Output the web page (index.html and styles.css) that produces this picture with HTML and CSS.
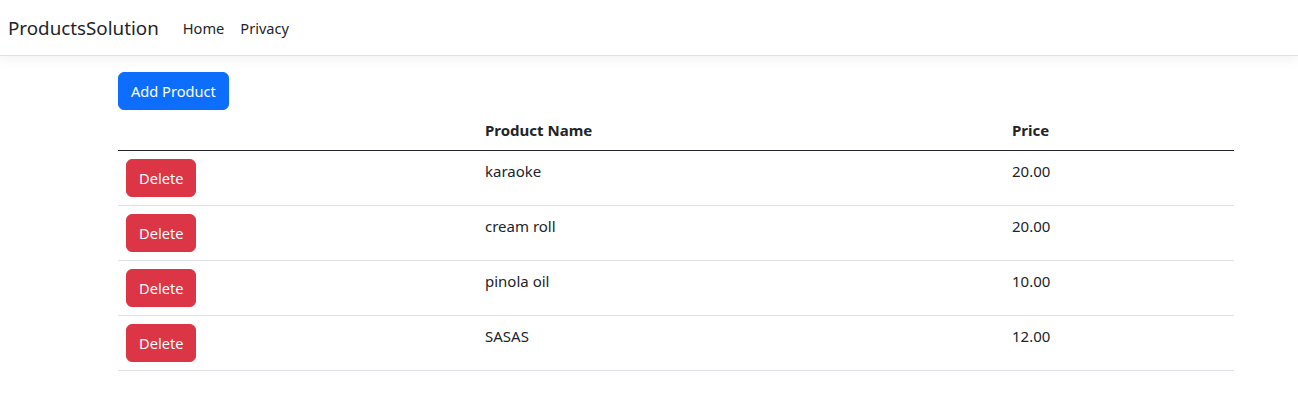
FILE: index.html
```html
<!DOCTYPE html>
<html lang="en">
<head>
<meta charset="utf-8">
<title>ProductsSolution</title>
<link rel="stylesheet" href="styles.css">
</head>
<body>
<header class="navbar">
  <a class="brand" href="#">ProductsSolution</a>
  <nav class="nav">
    <a class="nav-link" href="#">Home</a>
    <a class="nav-link" href="#">Privacy</a>
  </nav>
</header>
<main class="container">
  <div class="actions"><a class="btn btn-primary" href="#">Add Product</a></div>
  <table class="table">
    <colgroup>
      <col class="c1"><col class="c2"><col class="c3">
    </colgroup>
    <thead>
      <tr><th></th><th>Product Name</th><th>Price</th></tr>
    </thead>
    <tbody>
      <tr><td><button class="btn btn-danger">Delete</button></td><td>karaoke</td><td>20.00</td></tr>
      <tr><td><button class="btn btn-danger">Delete</button></td><td>cream roll</td><td>20.00</td></tr>
      <tr><td><button class="btn btn-danger">Delete</button></td><td>pinola oil</td><td>10.00</td></tr>
      <tr><td><button class="btn btn-danger">Delete</button></td><td>SASAS</td><td>12.00</td></tr>
    </tbody>
  </table>
</main>
</body>
</html>
```

FILE: styles.css
```css
* { box-sizing: border-box; }
html, body { margin: 0; padding: 0; }
body {
  font-family: "Noto Sans", "Open Sans", sans-serif;
  font-size: 15px;
  line-height: 24px;
  color: #212529;
  background: #fff;
}
a { text-decoration: none; }

.navbar {
  display: flex;
  align-items: center;
  height: 56px;
  padding: 0 8px;
  background: #fff;
  border-bottom: 1px solid #dee2e6;
  box-shadow: 0 4px 12px rgba(0,0,0,0.05);
  margin-bottom: 16px;
}
.brand {
  font-size: 18.8px;
  line-height: 30px;
  color: #212529;
  margin-right: 16px;
}
.nav { display: flex; }
.nav-link {
  color: #212529;
  font-size: 14.6px;
  padding: 0 8px;
  line-height: 24px;
}

.container {
  width: 1116px;
  margin-left: 118px;
}
.btn {
  display: inline-block;
  font-family: inherit;
  font-size: 14.6px;
  line-height: 24px;
  padding: 6px 12px;
  border: 1px solid transparent;
  border-radius: 6px;
  color: #fff;
  cursor: pointer;
}
.btn-primary { background: #0d6efd; border-color: #0d6efd; }
.btn-danger { background: #dc3545; border-color: #dc3545; }

.table {
  width: 100%;
  border-collapse: collapse;
  table-layout: fixed;
}
.c1 { width: 359px; }
.c2 { width: 527px; }
.c3 { width: 230px; }
.table th {
  text-align: left;
  font-weight: 700;
  padding: 8px;
  border-bottom: 1px solid #212529;
}
.table td {
  padding: 8px;
  vertical-align: top;
  border-bottom: 1px solid #dee2e6;
}
```
